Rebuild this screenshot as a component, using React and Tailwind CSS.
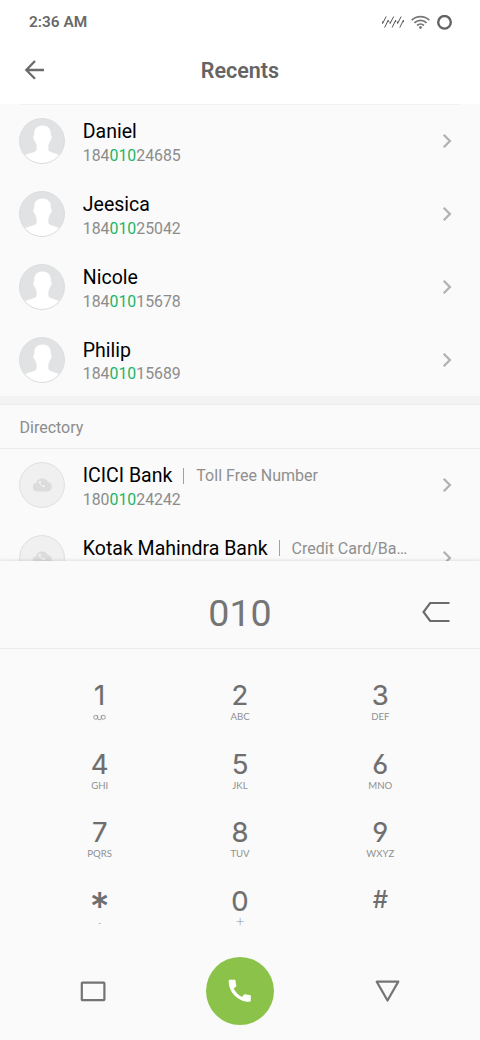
import React from 'react';

const contacts = [
  { name: 'Daniel', number: ['184', '010', '24685'] },
  { name: 'Jeesica', number: ['184', '010', '25042'] },
  { name: 'Nicole', number: ['184', '010', '15678'] },
  { name: 'Philip', number: ['184', '010', '15689'] },
];

const directory = [
  { name: 'ICICI Bank', note: 'Toll Free Number', number: ['180', '010', '24242'] },
  { name: 'Kotak Mahindra Bank', note: 'Credit Card/Ba…' },
];

const keys = [
  ['1', 'voicemail'], ['2', 'ABC'], ['3', 'DEF'],
  ['4', 'GHI'], ['5', 'JKL'], ['6', 'MNO'],
  ['7', 'PQRS'], ['8', 'TUV'], ['9', 'WXYZ'],
  ['*', '.'], ['0', '+'], ['#', ''],
];

function PersonAvatar() {
  return (
    <svg className="size-[46px] shrink-0" viewBox="0 0 46 46">
      <defs>
        <clipPath id="disc"><circle cx="23" cy="23" r="22.2" /></clipPath>
      </defs>
      <circle cx="23" cy="23" r="22.5" fill="#e0e2e4" />
      <g clipPath="url(#disc)">
        <path fill="#fff" d="M23.5 7.500C18.300 7.500 15.200 10.500 15.200 15.500v2c-1 .2-1 1.600-.7 3 .3 1.500.8 2.500 1.700 2.500.2 1.600.7 3 1.400 4v4.500c0 1.300-1 2-2.300 2.500C11 35.600 6.500 36 3.500 38.500V47h39v-8.500c-3-2.500-7-2.900-10.800-4.500-1.300-.5-2.300-1.200-2.300-2.500V27c.7-1 1.200-2.400 1.400-4 .9 0 1.400-1 1.700-2.500.3-1.400.3-2.800-.7-3v-2c0-5-3.100-8-8.300-8z" />
      </g>
      <circle cx="23" cy="23" r="22.5" fill="none" stroke="#d9dbdc" strokeWidth="0.9" />
    </svg>
  );
}

function CloudAvatar() {
  return (
    <svg className="size-[46px] shrink-0" viewBox="0 0 46 46">
      <circle cx="23" cy="23" r="22.4" fill="#f0f0f0" stroke="#dfdfdf" strokeWidth="1" />
      <path fill="#dcdcdc" d="M18.100 29.400a4.300 4.300 0 0 1-.9-8.500 6.300 6.300 0 0 1 11.700-.8 4.700 4.700 0 0 1-.3 9.300z" />
      <path fill="#f4f4f4" transform="translate(18.800 18) scale(.34)" d="M20.010 15.380c-1.230 0-2.420-.2-3.530-.56a.98.98 0 0 0-1.010.24l-1.570 1.970c-2.830-1.350-5.480-3.900-6.890-6.830l1.950-1.660c.27-.28.35-.67.240-1.020-.37-1.110-.56-2.300-.56-3.530C8.640 3.450 8.190 3 7.650 3H4.190C3.650 3 3 3.240 3 3.990 3 13.280 10.730 21 20.010 21c.71 0 .99-.63.99-1.180v-3.450c0-.54-.45-.99-.99-.99z" />
    </svg>
  );
}

function Row({ entry, avatar }) {
  return (
    <li className="flex h-[72.8px] shrink-0 items-center pl-[19px] pr-7">
      {avatar}
      <div className="ml-[17.800px] flex h-[52px] min-w-0 flex-1 flex-col pt-1">
        <div className="flex h-[25px] items-center whitespace-nowrap">
          <span className="text-[19.500px] leading-[25px] text-black">{entry.name}</span>
          {entry.note && (
            <>
              <span className="ml-[11px] h-4 w-px bg-[#a0a0a0]" />
              <span className="ml-3 text-[16px] leading-[25px] text-[#8f8f8f]">{entry.note}</span>
            </>
          )}
        </div>
        {entry.number && (
          <div className="-mt-[0.300px] text-[15.850px] leading-[23px] text-[#8c8c8c]">
            {entry.number[0]}<span className="text-[#1cb566]">{entry.number[1]}</span>{entry.number[2]}
          </div>
        )}
      </div>
      <svg className="h-4 w-[10px] shrink-0" viewBox="0 0 10 16" fill="none">
        <path d="M1.700 1.800 7.900 8l-6.200 6.200" stroke="#b2b2b2" strokeWidth="2.300" />
      </svg>
    </li>
  );
}

function Voicemail() {
  return (
    <svg className="h-[7px] w-[13px]" viewBox="0 0 13 7" fill="none" stroke="#949494" strokeWidth="0.9">
      <circle cx="2.700" cy="3.300" r="2" />
      <circle cx="10.300" cy="3.300" r="2" />
      <path d="M4.700 1.300v3.200q0 1.100 1 1.100h1.600q1 0 1-1.100V1.300" />
    </svg>
  );
}

function Key({ digit, sub }) {
  return (
    <button className="flex h-[68.500px] flex-col items-center text-[#6e6e6e]">
      <span className="flex h-[35px] items-center justify-center">
        {digit === '*' ? (
          <span className="h-[35px] translate-y-[4px] text-[39px] font-medium leading-[39px]">*</span>
        ) : digit === '#' ? (
          <span className="text-[24px] font-medium leading-none">#</span>
        ) : (
          <span className="mt-[3px] text-[27.500px] font-normal leading-none [-webkit-text-stroke:0.2px_#6e6e6e] [font-feature-settings:'cv03','cv04']">{digit}</span>
        )}
      </span>
      <span className="flex h-[10px] items-center justify-center font-[Lato,sans-serif] text-[9.600px] leading-none text-[#909090]">
        {sub === 'voicemail' ? <Voicemail /> : sub === '+' ? (
          <span className="-translate-y-px text-[15px] font-light">+</span>
        ) : sub === '.' ? (
          <span className="-translate-y-[2px]">.</span>
        ) : sub}
      </span>
    </button>
  );
}

export default function App() {
  return (
    <div className="flex h-[1040px] w-[480px] flex-col overflow-hidden bg-[#fafafa] font-[Roboto,sans-serif]">
      <header className="flex h-[104px] shrink-0 flex-col bg-white">
        <div className="flex h-[44px] items-center justify-between pl-[29px] pr-7">
          <span className="pt-[2px] text-[15.400px] font-semibold leading-none text-[#696969]">2:36 AM</span>
          <div className="flex items-center">
            <svg className="h-3 w-6" viewBox="0 0 24 12" fill="none" stroke="#555" strokeWidth="1">
              <path d="M5.200.5 1.600 7.500M1.600 5.500v2M7.200 4.200 3.600 11.500M7.200 4.200v2M12.700.5 9.100 7.500M9.100 5.500v2M14.700 4.200l-3.600 7.300M14.700 4.200v2M20.200.5 16.600 7.500M16.600 5.500v2M22.400 4.200l-3.600 7.300M22.400 4.200v2" />
            </svg>
            <svg className="ml-1.5 h-[14px] w-[19px]" viewBox="0 0 19 14" fill="none" stroke="#777" strokeWidth="1.800">
              <path d="M.7 5.100a12.700 12.700 0 0 1 17.600 0M3.400 7.900a8.800 8.800 0 0 1 12.200 0M6.100 10.500a5 5 0 0 1 6.800 0" />
              <circle cx="9.500" cy="12.500" r="1.400" fill="#777" stroke="none" />
            </svg>
            <svg className="ml-[7px] size-[15px]" viewBox="0 0 15 15" fill="none">
              <circle cx="7.500" cy="7.300" r="6.300" stroke="#636363" strokeWidth="2.400" />
            </svg>
          </div>
        </div>
        <div className="grid h-[60px] grid-cols-[60px_1fr_60px] items-start">
          <svg className="ml-6 mt-4 h-5 w-[21px]" viewBox="0 0 21 20" fill="none" stroke="#6b6b6b" strokeWidth="2.300">
            <path d="M20 10H2.500M11 1 2.300 10l8.700 8.800" />
          </svg>
          <h1 className="pt-[13px] text-center text-[21.500px] font-semibold leading-[28px] text-[#646464]">Recents</h1>
        </div>
      </header>

      <main className="flex h-[456.500px] shrink-0 flex-col overflow-hidden">
        <div className="mx-5 -mb-px h-px shrink-0 bg-[#f2f2f2]" />
        <ul className="-mb-[0.400px] flex shrink-0 flex-col pt-[0.900px]">
          {contacts.map((c) => <Row key={c.name} entry={c} avatar={<PersonAvatar />} />)}
        </ul>
        <div className="h-[9px] shrink-0 border-b border-[#ececec] bg-[#f3f3f3]" />
        <h2 className="flex h-[44px] shrink-0 items-center border-b border-[#ebebeb] pl-[19.500px] pt-1 text-[16px] text-[#8c8c8c]">Directory</h2>
        <ul className="flex shrink-0 flex-col">
          {directory.map((c) => <Row key={c.name} entry={c} avatar={<CloudAvatar />} />)}
        </ul>
      </main>

      <section className="relative flex flex-1 flex-col bg-[#fafafa] shadow-[0_-1px_3px_rgba(0,0,0,0.11)]">
        <div className="grid h-[88.500px] shrink-0 grid-cols-[60px_1fr_60px] items-center border-b border-[#ebebeb] pt-4">
          <div />
          <output className="pt-1 text-center text-[37.600px] leading-none text-[#757575]">010</output>
          <svg className="ml-[2px] h-5 w-[28px]" viewBox="0 0 28 20" fill="none" stroke="#6b6b6b" strokeWidth="2.100">
            <path d="M27.500 1H8.200L1.500 10l6.700 9h19.300" />
          </svg>
        </div>
        <div className="grid shrink-0 grid-cols-3 px-[29.500px] pt-[28px] font-[Inter,sans-serif]">
          {keys.map(([d, s]) => <Key key={d} digit={d} sub={s} />)}
        </div>
        <nav className="grid grid-cols-[186px_108px_186px] items-center pt-[6px]">
          <svg className="h-[21px] w-[26px] justify-self-center" viewBox="0 0 26 21" fill="none">
            <rect x="1.800" y="1.600" width="22.600" height="17.600" rx="0.700" stroke="#737373" strokeWidth="2.200" />
          </svg>
          <button className="flex size-[68px] items-center justify-center justify-self-center rounded-full bg-[#8bc34a]">
            <svg className="size-[29.500px]" viewBox="0 0 24 24" fill="#fff">
              <path d="M20.010 15.380c-1.230 0-2.420-.2-3.530-.56a.98.98 0 0 0-1.010.24l-1.570 1.970c-2.830-1.350-5.480-3.900-6.890-6.830l1.950-1.660c.27-.28.35-.67.240-1.020-.37-1.110-.56-2.300-.56-3.530C8.640 3.450 8.190 3 7.650 3H4.190C3.650 3 3 3.240 3 3.990 3 13.280 10.730 21 20.010 21c.71 0 .99-.63.99-1.180v-3.450c0-.54-.45-.99-.99-.99z" />
            </svg>
          </button>
          <svg className="h-[23px] w-[25px] justify-self-center" viewBox="0 0 25 23" fill="none">
            <path d="M1.700 1.600h21.600L12.500 20.500z" stroke="#757575" strokeWidth="2.200" strokeLinejoin="round" />
          </svg>
        </nav>
      </section>
    </div>
  );
}
